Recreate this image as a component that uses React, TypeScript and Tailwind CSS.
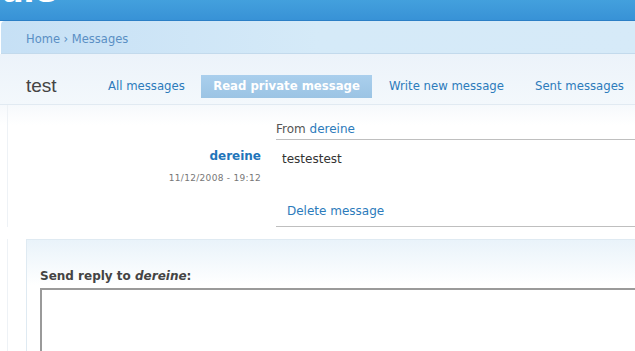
import React from 'react';

const FONT = { fontFamily: '"DejaVu Sans", Verdana, sans-serif' };

export default function App() {
  return (
    <div className="w-[635px] h-[351px] overflow-hidden bg-white" style={FONT}>
      {/* top header strip */}
      <div className="h-[21px] overflow-hidden bg-gradient-to-b from-[#43a0dd] to-[#3892d6] border-b border-[#2b7fc6]">
        <div className="-mt-[22px] pl-[2px] text-[32px] font-bold leading-[26px] text-white">ale</div>
      </div>

      {/* breadcrumb */}
      <div className="ml-[1px] h-[33px] flex items-center rounded-tl-[4px] bg-gradient-to-r from-[#c6e0f5] via-[#d5eaf8] to-[#d6eaf8] border-b border-[#c3daec]">
        <div className="pl-[25px] pt-[6px] text-[11.5px] text-[#5a8fc4]">Home › Messages</div>
      </div>

      {/* title + tabs */}
      <div className="h-[51px] flex items-end pb-[6px] bg-gradient-to-b from-[#ecf3fa] to-[#f3f8fc] border-b border-[#e1eaf2]">
        <div className="pl-[26px] w-[108px] h-[23px] flex items-center text-[19px] text-[#444]" style={{ fontFamily: '"Liberation Sans", Arial, sans-serif' }}>
          test
        </div>
        <div className="flex items-center text-[11.7px] text-[#2c7bbb]">
          <span className="w-[93px]">All messages</span>
          <span className="w-[171px] h-[23px] flex items-center justify-center bg-gradient-to-b from-[#aacfed] to-[#9bc4e4] text-white font-bold">
            Read private message
          </span>
          <span className="ml-[17px] w-[146px]">Write new message</span>
          <span>Sent messages</span>
        </div>
      </div>

      {/* message */}
      <div className="flex pl-[7px] bg-gradient-to-b from-[#f6f9fc] to-white to-[20px]">
        <div className="w-[269px] border-l border-[#eef2f6] pt-[42px] pr-[15px] flex flex-col items-end">
          <span className="text-[12px] font-bold text-[#1f75ba]">dereine</span>
          <span className="mt-[7px] text-[9px] text-[#777] tracking-[0.3px]">11/12/2008 - 19:12</span>
        </div>
        <div className="flex-1 pt-[15px]">
          <div className="h-[20px] border-b border-[#bfbfbf] text-[12px] text-[#555]">
            From <span className="text-[#2c7bbb]">dereine</span>
          </div>
          <div className="pl-[6px] pt-[10px] h-[62px] text-[12px] text-[#333]">testestest</div>
          <div className="pl-[11px] h-[25px] border-b border-[#bfbfbf] text-[12px] text-[#2c7bbb]">Delete message</div>
        </div>
      </div>

      {/* reply */}
      <div className="flex pl-[7px] pt-[12px]">
        <div className="w-[19px] border-l border-[#eef2f6]" />
        <div className="flex-1 h-[120px] border-t border-l border-[#dfeaf2] bg-gradient-to-b from-[#e9f3fa] to-white to-[45px] pl-[13px] pt-[27px]">
          <div className="text-[12px] font-bold text-[#444]">
            Send reply to <em>dereine</em>:
          </div>
          <div className="mt-[3px] h-[80px] border-t-2 border-l-2 border-[#9a9a9a] bg-white" />
        </div>
      </div>
    </div>
  );
}
